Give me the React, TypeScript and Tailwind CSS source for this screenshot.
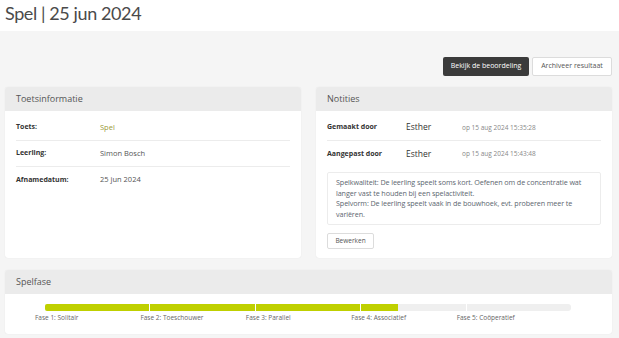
import React from "react";

const phases = [
  { label: "Fase 1: Solitair", fill: 100 },
  { label: "Fase 2: Toeschouwer", fill: 100 },
  { label: "Fase 3: Parallel", fill: 100 },
  { label: "Fase 4: Associatief", fill: 35 },
  { label: "Fase 5: Coöperatief", fill: 0 },
];

function Card({ title, children, className = "" }: { title: string; children: React.ReactNode; className?: string }) {
  return (
    <div className={`bg-white rounded-[3px] shadow-[0_0_1px_rgba(0,0,0,0.12)] overflow-hidden ${className}`}>
      <div className="h-6 bg-[#ebebeb] px-[11px] flex items-center text-[9px] text-[#555]">{title}</div>
      {children}
    </div>
  );
}

export default function App() {
  return (
    <div className="w-[619px] h-[338px] bg-[#f5f5f5] font-['Open_Sans',sans-serif] overflow-hidden">
      <div className="h-[31px] bg-white px-[5px] pt-[1px]">
        <h1 className="text-[18px] leading-[24px] tracking-[-0.4px] text-[#4a4a4a] font-['Lato',sans-serif]">Spel | 25 jun 2024</h1>
      </div>

      <div className="flex justify-end gap-[3px] pr-[7px] pt-[26px]">
        <button className="h-[19px] w-[86px] bg-[#3b3b3b] text-white text-[7px] rounded-[2px]">Bekijk de beoordeling</button>
        <button className="h-[19px] w-[80px] bg-white border border-[#dcdcdc] text-[#555] text-[7px] rounded-[2px]">Archiveer resultaat</button>
      </div>

      <div className="flex gap-[15px] px-[5px] pr-[7px] mt-[11px]">
        <Card title="Toetsinformatie" className="w-[296px] h-[171px]">
          <div className="px-[11px] pt-[4px]">
            {[
              ["Toets:", "Spel", "text-[#9a9a3a]"],
              ["Leerling:", "Simon Bosch", "text-[#555]"],
              ["Afnamedatum:", "25 jun 2024", "text-[#555]"],
            ].map(([k, v, c], i) => (
              <div key={k} className={`flex items-center h-[26px] ${i < 2 ? "border-b border-[#ececec]" : ""}`}>
                <span className="w-[84px] text-[7px] font-bold text-[#333]">{k}</span>
                <span className={`text-[7.5px] ${c}`}>{v}</span>
              </div>
            ))}
          </div>
        </Card>

        <Card title="Notities" className="w-[296px] h-[171px]">
          <div className="px-[11px] pt-[4px]">
            {[
              ["Gemaakt door", "op 15 aug 2024 15:35:28"],
              ["Aangepast door", "op 15 aug 2024 15:43:48"],
            ].map(([k, d], i) => (
              <div key={k} className={`flex items-center h-[26px] ${i === 0 ? "border-b border-[#ececec]" : ""}`}>
                <span className="w-[79px] text-[7px] font-bold text-[#333]">{k}</span>
                <span className="w-[56px] text-[8.5px] text-[#333]">Esther</span>
                <span className="text-[6.5px] text-[#888]">{d}</span>
              </div>
            ))}
            <div className="mt-[5px] border border-[#ececec] rounded-[2px] pl-[8px] pr-[10px] py-[4px] text-[7.2px] leading-[10.7px] text-[#5c6670] tracking-[-0.1px]">
              Spelkwaliteit: De leerling speelt soms kort. Oefenen om de concentratie wat langer vast te houden bij een spelactiviteit.
              <br />
              Spelvorm: De leerling speelt vaak in de bouwhoek, evt. proberen meer te variëren.
            </div>
            <button className="mt-[7px] h-[16px] w-[47px] border border-[#dcdcdc] rounded-[2px] text-[6.5px] text-[#555]">Bewerken</button>
          </div>
        </Card>
      </div>

      <div className="px-[5px] pr-[7px] mt-[12px]">
        <Card title="Spelfase" className="h-[64px]">
          <div className="pl-[40px] pt-[10px]">
            <div className="flex gap-px w-[526px]">
              {phases.map((p, i) => (
                <div key={i} className={`flex-1 h-[7px] bg-[#efefef] overflow-hidden ${i === 0 ? "rounded-l-[2px]" : ""} ${i === 4 ? "rounded-r-[3px]" : ""}`}>
                  <div className="h-full bg-[#bfd000]" style={{ width: `${p.fill}%` }} />
                </div>
              ))}
            </div>
            <div className="flex gap-px w-[526px] -ml-[10px] mt-[2px]">
              {phases.map((p, i) => (
                <div key={i} className="flex-1 text-[6.5px] text-[#666]">{p.label}</div>
              ))}
            </div>
          </div>
        </Card>
      </div>
    </div>
  );
}
